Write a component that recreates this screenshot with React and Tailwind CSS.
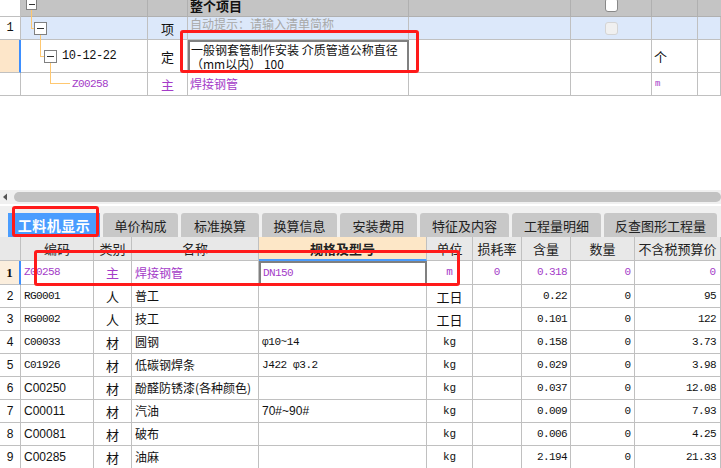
const purple = 'text-[#a43cc8]'
const mono = "font-['Liberation_Mono','Noto_Sans_CJK_SC',monospace]"
const cell = 'border-r border-b border-[#c0c0c0] flex items-center overflow-hidden'

const topCols = 'grid grid-cols-[21px_127px_40px_221px_162px_81px_46px_23px]'
const botCols = 'grid grid-cols-[21px_73px_38px_127px_168px_46px_49px_49px_64px_86px]'

const rows = [
  { n: 2, code: 'RG0001', type: '人', name: '普工', spec: '', unit: '工日', qty: '0.22', price: '95' },
  { n: 3, code: 'RG0002', type: '人', name: '技工', spec: '', unit: '工日', qty: '0.101', price: '122' },
  { n: 4, code: 'C00033', type: '材', name: '圆钢', spec: 'φ10~14', unit: 'kg', qty: '0.158', price: '3.73' },
  { n: 5, code: 'C01926', type: '材', name: '低碳钢焊条', spec: 'J422 φ3.2', unit: 'kg', qty: '0.029', price: '3.98' },
  { n: 6, code: 'C00250', type: '材', name: '酚醛防锈漆(各种颜色)', spec: '', unit: 'kg', qty: '0.037', price: '12.08', sans: true },
  { n: 7, code: 'C00011', type: '材', name: '汽油', spec: '70#~90#', unit: 'kg', qty: '0.009', price: '7.93', sans: true },
  { n: 8, code: 'C00081', type: '材', name: '破布', spec: '', unit: 'kg', qty: '0.006', price: '4.25', sans: true },
  { n: 9, code: 'C00285', type: '材', name: '油麻', spec: '', unit: 'kg', qty: '2.194', price: '21.33', sans: true },
]

const tabs = [
  { label: '单价构成', w: 'w-[75px]' },
  { label: '标准换算', w: 'w-[78px]' },
  { label: '换算信息', w: 'w-[75px]' },
  { label: '安装费用', w: 'w-[77px]' },
  { label: '特征及内容', w: 'w-[89px]' },
  { label: '工程量明细', w: 'w-[89px]' },
  { label: '反查图形工程量', w: 'w-[113px]' },
]

function TreeLines() {
  return (
    <svg className="absolute left-[21px] top-0" width="127" height="96" shapeRendering="crispEdges">
      <g stroke="#ffc870" strokeWidth="1" fill="none">
        <path d="M10.5 10 V28.5 H13.5" />
        <path d="M19.5 35 V56.5 H23.5" />
        <path d="M29.5 63 V83.5 H49" />
      </g>
      <g stroke="#808080" fill="#fff">
        <rect x="5.5" y="-1.5" width="10" height="11" />
        <rect x="13.5" y="22.5" width="12" height="12" />
        <rect x="23.5" y="50.5" width="12" height="12" />
      </g>
      <g stroke="#333">
        <path d="M7.5 4.5 H13.5" />
        <path d="M16 28.5 H23" />
        <path d="M26 56.5 H33" />
      </g>
    </svg>
  )
}

function TopTable() {
  return (
    <div className="relative">
      {/* header */}
      <div className={`${topCols} h-[17px]`}>
        <div className="border-r border-b border-[#c0c0c0] bg-white" />
        <div className="border-r border-b border-[#b0b0b0] bg-[#c4c4c4]" />
        <div className="border-r border-b border-[#b0b0b0] bg-[#c4c4c4]" />
        <div className="border-r border-b border-[#b0b0b0] bg-[#c4c4c4] overflow-hidden">
          <span className="block pl-[2px] -mt-[2px] text-[13px] leading-[15px] font-bold text-[#111]">整个项目</span>
        </div>
        <div className="border-r border-b border-[#b0b0b0] bg-[#c4c4c4]" />
        <div className="border-r border-b border-[#b0b0b0] bg-[#c4c4c4] flex justify-center overflow-hidden">
          <div className="w-[13px] h-[14px] -mt-[2px] bg-white border border-[#888] rounded-[3px]" />
        </div>
        <div className="border-r border-b border-[#b0b0b0] bg-[#c4c4c4]" />
        <div className="border-b border-[#b0b0b0] bg-[#c4c4c4]" />
      </div>
      {/* row 1 */}
      <div className={`${topCols} h-[23px] bg-[#dce8fa]`}>
        <div className={`${cell} bg-white justify-center text-[12px] ${mono}`}>1</div>
        <div className={cell} />
        <div className={`${cell} justify-center text-[13px]`}>项</div>
        <div className={`${cell} items-start`}>
          <span className="pl-[2px] mt-0 text-[12px] leading-[14px] text-[#a8a8a8] whitespace-nowrap">自动提示：请输入清单简称</span>
        </div>
        <div className={cell} />
        <div className={`${cell} justify-center`}>
          <div className="w-[13px] h-[13px] bg-[#f0f0f0] border border-[#d4d4d4] rounded-[3px]" />
        </div>
        <div className={cell} />
        <div className={cell} />
      </div>
      {/* row 2 */}
      <div className={`${topCols} h-[33px] bg-white`}>
        <div className="border-b border-[#c0c0c0] border-r-2 border-r-[#3d8fff] bg-[#fde6c9]" />
        <div className={`${cell} pl-[41px] text-[12px] ${mono} tracking-[-0.4px]`}>10-12-22</div>
        <div className={`${cell} justify-center text-[13px]`}>定</div>
        <div className="border-2 border-[#808080] px-[1px] pt-[1px] text-[12px] leading-[14px] text-[#111]">
          <div className="whitespace-nowrap">一般钢套管制作安装 介质管道公称直径</div>
          <div className="whitespace-nowrap">（mm以内） 100</div>
        </div>
        <div className={cell} />
        <div className={cell} />
        <div className={`${cell} pl-[2px] text-[13px]`}>个</div>
        <div className={cell} />
      </div>
      {/* row 3 */}
      <div className={`${topCols} h-[23px] bg-white`}>
        <div className={cell} />
        <div className={`${cell} pl-[51px] text-[11px] ${mono} tracking-[-0.6px] ${purple}`}>Z00258</div>
        <div className={`${cell} justify-center text-[13px] ${purple}`}>主</div>
        <div className={`${cell} pl-[2px] text-[12px] ${purple}`}>焊接钢管</div>
        <div className={cell} />
        <div className={cell} />
        <div className={`${cell} pl-[3px] text-[9px] ${mono} ${purple}`}>m</div>
        <div className={cell} />
      </div>
      <TreeLines />
    </div>
  )
}

function Scrollbar() {
  return (
    <div className="h-[14px] bg-[#f0f0f0] flex items-center">
      <svg width="14" height="10" className="shrink-0">
        <path d="M3 5 L7 1.5 V8.5 Z" fill="#555" />
      </svg>
      <div className="flex-1 h-[10px] rounded-full bg-[#c2c2c2]" />
    </div>
  )
}

function Tabs() {
  return (
    <div className="h-[33px] bg-[#f0f0f0] border-t-2 border-white flex items-end pl-[8px] gap-[3px]">
      <div className="w-[92px] h-[24px] bg-[#4a9dff] flex items-center justify-center text-white text-[14px] font-bold tracking-[0.5px]">
        工料机显示
      </div>
      {tabs.map((t) => (
        <div
          key={t.label}
          className={`${t.w} h-[24px] bg-[#c8c8c8] rounded-t-[3px] flex items-center justify-center text-[13px] text-[#222] whitespace-nowrap`}
        >
          {t.label}
        </div>
      ))}
    </div>
  )
}

function BottomTable() {
  const head = ['', '编码', '类别', '名称', '规格及型号', '单位', '损耗率', '含量', '数量', '不含税预算价']
  return (
    <div>
      <div className={`${botCols} h-[24px] bg-[#e8e8e8] text-[13px] text-[#222]`}>
        {head.map((h, i) =>
          i === 4 ? (
            <div key={i} className="border-r border-[#c0c0c0] border-b-2 border-b-[#4a9dff] bg-[#fde7c7] flex items-center justify-center font-bold">
              {h}
            </div>
          ) : (
            <div key={i} className={`${cell} justify-center whitespace-nowrap`}>{h}</div>
          )
        )}
      </div>

      {/* row 1 (selected) */}
      <div className={`${botCols} h-[24px] bg-white ${purple}`}>
        <div className="border-b border-[#c0c0c0] border-r-2 border-r-[#3d8fff] bg-[#fbeedd] flex items-center justify-center text-[13px] font-bold text-[#111] font-['Liberation_Serif',serif]">1</div>
        <div className={`${cell} pl-[3px] text-[11px] ${mono} tracking-[-0.6px]`}>Z00258</div>
        <div className={`${cell} justify-center text-[13px]`}>主</div>
        <div className={`${cell} pl-[3px] text-[12px]`}>焊接钢管</div>
        <div className={`border-2 border-[#808080] flex items-center pl-[2px] text-[11px] ${mono} tracking-[-0.6px]`}>DN150</div>
        <div className={`${cell} justify-center text-[11px] ${mono}`}>m</div>
        <div className={`${cell} justify-center text-[11px] ${mono}`}>0</div>
        <div className={`${cell} justify-end pr-[3px] text-[11px] ${mono} tracking-[-0.6px]`}>0.318</div>
        <div className={`${cell} justify-end pr-[3px] text-[11px] ${mono}`}>0</div>
        <div className={`${cell} justify-end pr-[4px] text-[11px] ${mono}`}>0</div>
      </div>

      {rows.map((r) => {
        const codeFont = r.sans
          ? "font-['Liberation_Sans',sans-serif] text-[12px]"
          : `${mono} text-[11px] tracking-[-0.6px]`
        return (
          <div key={r.n} className={`${botCols} h-[23px] bg-white text-[#111]`}>
            <div className={`${cell} justify-center text-[12px] font-['Liberation_Sans',sans-serif]`}>{r.n}</div>
            <div className={`${cell} pl-[3px] ${codeFont}`}>{r.code}</div>
            <div className={`${cell} justify-center text-[13px]`}>{r.type}</div>
            <div className={`${cell} pl-[3px] text-[12px] whitespace-nowrap`}>{r.name}</div>
            <div className={`${cell} pl-[3px] whitespace-nowrap ${r.sans ? "font-['Liberation_Sans',sans-serif] text-[12px]" : `${mono} text-[11px] tracking-[-0.4px]`}`}>{r.spec}</div>
            <div className={`${cell} justify-center ${r.unit === 'kg' ? `${mono} text-[11px]` : 'text-[13px]'}`}>{r.unit}</div>
            <div className={cell} />
            <div className={`${cell} justify-end pr-[3px] text-[11px] ${mono} tracking-[-0.6px]`}>{r.qty}</div>
            <div className={`${cell} justify-end pr-[3px] text-[11px] ${mono}`}>0</div>
            <div className={`${cell} justify-end pr-[4px] text-[11px] ${mono} tracking-[-0.6px]`}>{r.price}</div>
          </div>
        )
      })}
    </div>
  )
}

export default function App() {
  return (
    <div className="relative w-[721px] h-[468px] overflow-hidden bg-white font-['Noto_Sans_CJK_SC',sans-serif] text-[#111] leading-none">
      <TopTable />
      <div className="h-[94px] bg-white" />
      <Scrollbar />
      <Tabs />
      <BottomTable />

      {/* red annotation boxes */}
      <div className="absolute left-[180px] top-[30px] w-[239px] h-[43px] border-[3px] border-[#ff1a1a] rounded-[3px] pointer-events-none" />
      <div className="absolute left-[12px] top-[206px] w-[87px] h-[31px] border-[3px] border-[#ff1a1a] rounded-[3px] pointer-events-none" />
      <div className="absolute left-[34px] top-[250px] w-[426px] h-[36px] border-[3px] border-[#ff1a1a] rounded-[3px] pointer-events-none" />
    </div>
  )
}
